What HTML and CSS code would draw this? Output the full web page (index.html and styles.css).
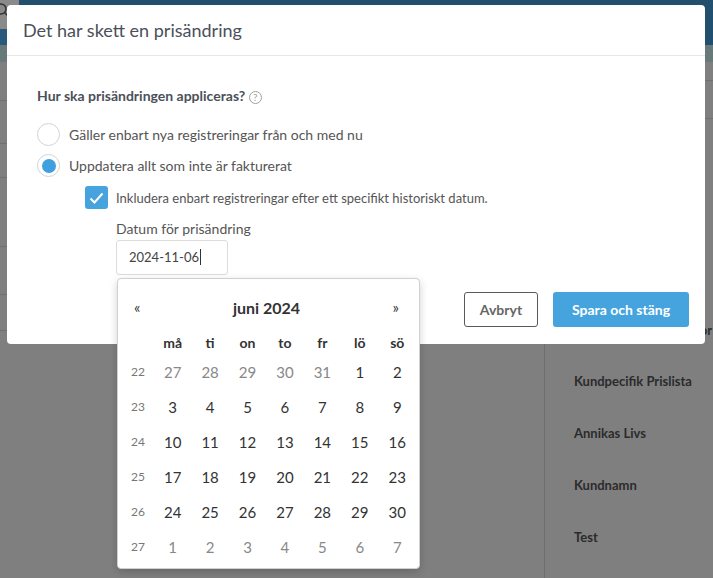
FILE: index.html
```html
<!DOCTYPE html>
<html>
  <head>
    <meta charset="utf-8">
    <title>Prisändring</title>
    <link rel="stylesheet" href="styles.css">
  </head>
  <body>
    <div class="app">
      <div class="topbar">
        <div class="topbar-left">
          <svg class="search-icon" width="16" height="16" viewBox="0 0 16 16">
            <circle cx="6" cy="6" r="5" fill="none" stroke="#333" stroke-width="1.5"/>
            <line x1="9.5" y1="9.5" x2="14" y2="14" stroke="#333" stroke-width="1.5"/>
          </svg>
        </div>
      </div>
      <div class="subbar"></div>
      <div class="main">
        <div class="left-col">
          <div class="lrow" style="height:38px"></div>
          <div class="lrow" style="height:42px"></div>
          <div class="lrow" style="height:33px"></div>
          <div class="lrow" style="height:68px"></div>
          <div class="lrow" style="height:47px"></div>
          <div class="lrow" style="height:35px"></div>
        </div>
        <div class="right-col">
          <div class="rrow" style="height:18px"></div>
          <div class="rrow" style="height:37px"></div>
          <div class="rrow rrow-head"><span>Kundspecifika prislistor</span></div>
          <div class="item">Kundpecifik Prislista</div>
          <div class="item">Annikas Livs</div>
          <div class="item">Kundnamn</div>
          <div class="item">Test</div>
        </div>
      </div>
    </div>

    <div class="modal">
      <div class="modal-header">Det har skett en prisändring</div>
      <div class="modal-body">
        <div class="question">Hur ska prisändringen appliceras? <span class="help">?</span></div>
        <label class="radio-row">
          <span class="radio"></span>
          <span>Gäller enbart nya registreringar från och med nu</span>
        </label>
        <label class="radio-row">
          <span class="radio checked"></span>
          <span>Uppdatera allt som inte är fakturerat</span>
        </label>
        <div class="sub">
          <label class="check-row">
            <span class="checkbox">
              <svg width="15" height="12" viewBox="0 0 15 12"><polyline points="1.5,6.5 5.5,10.5 13.5,1.5" fill="none" stroke="#fff" stroke-width="2"/></svg>
            </span>
            <span>Inkludera enbart registreringar efter ett specifikt historiskt datum.</span>
          </label>
          <div class="field">
            <div class="field-label">Datum för prisändring</div>
            <div class="input">2024-11-06<span class="caret"></span></div>
            <div class="datepicker">
              <div class="dp-head">
                <span class="dp-nav">«</span>
                <span class="dp-title">juni 2024</span>
                <span class="dp-nav">»</span>
              </div>
              <table class="dp-table">
                <tr class="dp-dow"><th></th><th>må</th><th>ti</th><th>on</th><th>to</th><th>fr</th><th>lö</th><th>sö</th></tr>
                <tr><td class="wk">22</td><td class="old">27</td><td class="old">28</td><td class="old">29</td><td class="old">30</td><td class="old">31</td><td>1</td><td>2</td></tr>
                <tr><td class="wk">23</td><td>3</td><td>4</td><td>5</td><td>6</td><td>7</td><td>8</td><td>9</td></tr>
                <tr><td class="wk">24</td><td>10</td><td>11</td><td>12</td><td>13</td><td>14</td><td>15</td><td>16</td></tr>
                <tr><td class="wk">25</td><td>17</td><td>18</td><td>19</td><td>20</td><td>21</td><td>22</td><td>23</td></tr>
                <tr><td class="wk">26</td><td>24</td><td>25</td><td>26</td><td>27</td><td>28</td><td>29</td><td>30</td></tr>
                <tr><td class="wk">27</td><td class="old">1</td><td class="old">2</td><td class="old">3</td><td class="old">4</td><td class="old">5</td><td class="old">6</td><td class="old">7</td></tr>
              </table>
            </div>
          </div>
        </div>
      </div>
      <div class="modal-footer">
        <button class="btn btn-default">Avbryt</button>
        <button class="btn btn-primary">Spara och stäng</button>
      </div>
    </div>
  </body>
</html>
```

FILE: styles.css
```css
body {
  margin: 0;
  width: 713px;
  height: 578px;
  overflow: hidden;
  background-color: #7f7f7f;
  font-family: Lato, "Liberation Sans", sans-serif;
  position: relative;
}
.topbar {
  height: 45px;
  display: flex;
  background-color: #234f6e;
}
.topbar-left {
  width: 19px;
  background: linear-gradient(#8a8a8a 0, #8a8a8a 29px, #2a5a7b 29px);
  overflow: hidden;
}
.search-icon {
  margin: 3px 0 0 -5px;
}
.subbar {
  height: 17px;
  background-color: #687979;
}
.main {
  display: flex;
}
.left-col {
  width: 544px;
  border-right: 1px solid #6f6f6f;
  height: 516px;
}
.lrow {
  border-bottom: 1px solid #707070;
}
.right-col {
  flex: 1;
}
.rrow {
  border-bottom: 1px solid #707070;
}
.rrow-head {
  border-bottom: 0;
  height: 236px;
  display: flex;
  align-items: flex-end;
  justify-content: flex-end;
  padding-bottom: 17px;
  box-sizing: border-box;
  white-space: nowrap;
  overflow: hidden;
  font-size: 13px;
  font-weight: bold;
  color: #2b2b2b;
}
.rrow-head span {
  margin-right: 1px;
}
.item {
  height: 52px;
  line-height: 52px;
  padding-left: 29px;
  font-size: 13px;
  font-weight: bold;
  color: #2b2b2b;
}

.modal {
  position: absolute;
  left: 7px;
  top: 5px;
  width: 698px;
  height: 339px;
  background-color: #fff;
  border-radius: 4px;
}
.modal-header {
  height: 50px;
  line-height: 50px;
  padding-left: 16px;
  border-bottom: 1px solid #e6e6e6;
  font-size: 18px;
  color: #4a5059;
}
.modal-body {
  padding: 31px 30px 0 30px;
}
.question {
  font-size: 14px;
  font-weight: bold;
  color: #4a5059;
  height: 17px;
  line-height: 17px;
  margin-bottom: 19px;
}
.help {
  display: inline-block;
  width: 11px;
  height: 11px;
  border: 1px solid #a0a0a0;
  border-radius: 50%;
  font-size: 10px;
  line-height: 11px;
  text-align: center;
  color: #a0a0a0;
  font-weight: normal;
  vertical-align: 0;
}
.radio-row {
  display: flex;
  align-items: center;
  gap: 9px;
  height: 23px;
  margin-bottom: 8px;
  font-size: 14px;
  color: #555;
}
.radio {
  width: 21px;
  height: 21px;
  border: 1px solid #cfd3da;
  border-radius: 50%;
  display: flex;
  align-items: center;
  justify-content: center;
  flex-shrink: 0;
}
.radio.checked::after {
  content: "";
  width: 14px;
  height: 14px;
  border-radius: 50%;
  background-color: #3fa0e0;
}
.sub {
  padding-left: 48px;
  padding-top: 1px;
}
.check-row {
  display: flex;
  align-items: center;
  gap: 8px;
  height: 23px;
  font-size: 13px;
  color: #555;
}
.checkbox {
  width: 23px;
  height: 23px;
  background-color: #46a3de;
  border-radius: 3px;
  display: flex;
  align-items: center;
  justify-content: center;
}
.field {
  position: relative;
  margin: 11px 0 0 31px;
}
.field-label {
  font-size: 14px;
  line-height: 17px;
  color: #555;
  margin-bottom: 3px;
}
.input {
  width: 110px;
  height: 33px;
  line-height: 33px;
  border: 1px solid #dcdcdc;
  border-radius: 3px;
  font-size: 13px;
  color: #444;
  text-indent: 12px;
}
.caret {
  display: inline-block;
  width: 1px;
  height: 16px;
  background-color: #333;
  vertical-align: -3px;
  margin-left: 1px;
}
.datepicker {
  position: absolute;
  left: 1px;
  top: 58px;
  width: 294px;
  height: 285px;
  background-color: #fff;
  border: 1px solid #d0d0d0;
  border-radius: 4px;
  box-shadow: 0 3px 8px rgba(0, 0, 0, 0.18);
  z-index: 2;
  padding: 4px 3px 0 4px;
  color: #333;
}
.dp-head {
  display: flex;
  align-items: center;
  justify-content: space-between;
  height: 48px;
  padding: 0 17px 0 12px;
}
.dp-nav {
  font-size: 15px;
  color: #333;
}
.dp-title {
  font-size: 16px;
  font-weight: bold;
  color: #333;
}
.dp-table {
  border-collapse: collapse;
  table-layout: fixed;
  color: #333;
}
.dp-table th {
  height: 23px;
  font-size: 14px;
  font-weight: bold;
  padding: 0;
  width: 37.5px;
}
.dp-table th:first-child {
  width: 32px;
}
.dp-table td {
  height: 35px;
  padding: 0;
  text-align: center;
  font-size: 15px;
}
.dp-table td.old {
  color: #888;
}
.dp-table td.wk {
  font-size: 12px;
  color: #777;
}
.modal-footer {
  display: flex;
  justify-content: flex-end;
  gap: 15px;
  padding-right: 16px;
  margin-top: 17px;
}
.btn {
  height: 35px;
  border-radius: 3px;
  font-family: Lato, "Liberation Sans", sans-serif;
  font-size: 14px;
  font-weight: bold;
  padding: 0;
}
.btn-default {
  width: 74px;
  background-color: #fff;
  border: 1px solid #5a5a5a;
  color: #666;
}
.btn-primary {
  width: 136px;
  background-color: #45a4de;
  border: 0;
  color: #fff;
}
```
